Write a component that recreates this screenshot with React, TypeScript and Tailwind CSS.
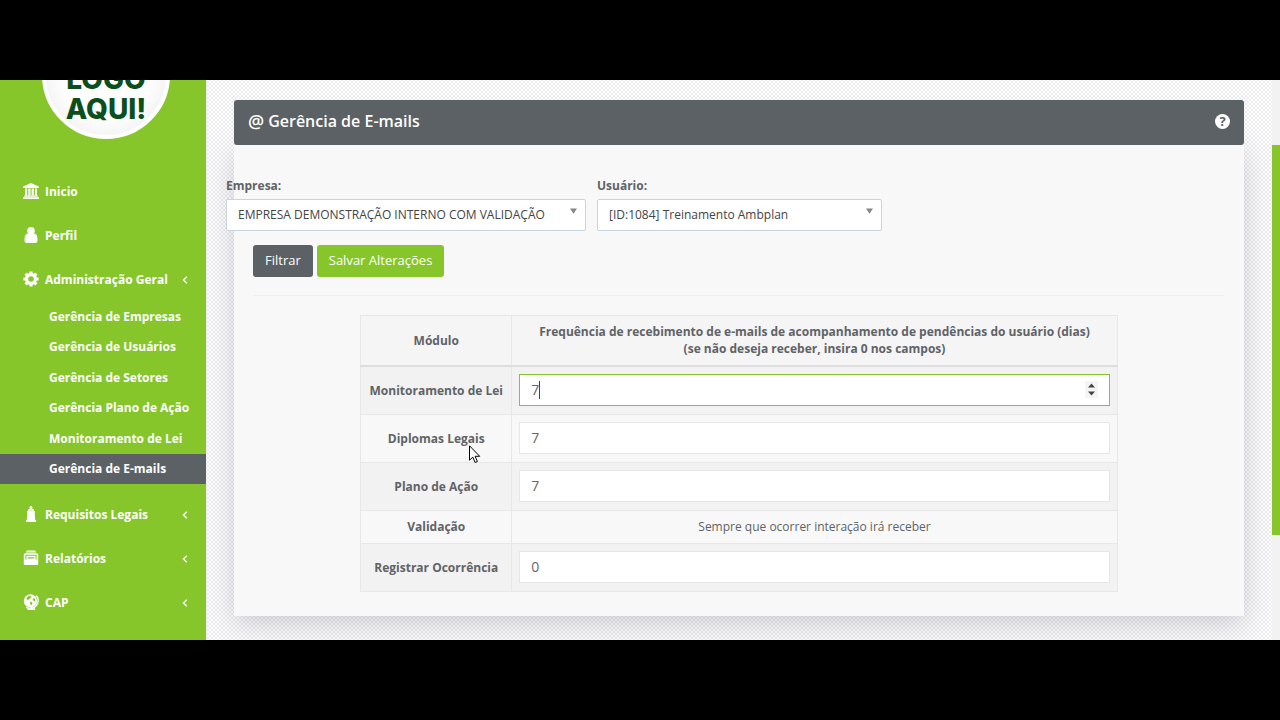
import { useState } from "react";
import type { ReactNode } from "react";

function Icon({ children }: { children: ReactNode }) {
  return (
    <svg viewBox="0 0 16 16" className="mb-[3px] size-4 shrink-0" fill="currentColor" aria-hidden="true">
      {children}
    </svg>
  );
}

const bank = (
  <Icon>
    <path d="M8 0 15.8 3.400V5H.2V3.400ZM2 5.400h2.200v6.800H2ZM5.300 5.400h2.200v6.800H5.300ZM8.600 5.400h2.200v6.800H8.600ZM11.900 5.400H14v6.800h-2.100ZM1.200 12.500h13.600v1.300H1.200ZM0 14.200h16V16H0Z" />
  </Icon>
);
const person = (
  <Icon>
    <circle cx="8" cy="3.800" r="3.800" />
    <path d="M1.500 13.600C1.500 9.600 2.200 6.600 5 6.500h6c2.800.1 3.500 3.100 3.500 7.100 0 1.500-.9 2.400-2.200 2.400H3.700c-1.300 0-2.200-.9-2.200-2.400Z" />
  </Icon>
);
const gear = (
  <Icon>
    <circle cx="8" cy="8" r="4.400" fill="none" stroke="currentColor" strokeWidth="3.200" />
    <path
      stroke="currentColor"
      strokeWidth="3.200"
      d="M8 .4v2.600M8 13v2.600M.4 8h2.600M13 8h2.600M2.600 2.600l1.900 1.900M11.500 11.500l1.900 1.900M2.600 13.400l1.900-1.900M11.500 4.500l1.900-1.900"
    />
  </Icon>
);
const monument = (
  <Icon>
    <path d="M8 0a1.500 1.500 0 0 1 1.100 2.500l1.900 1.200v1.100l1 .6v1h-.3l.5 7.800h.9V16H3v-1.800h.8l.5-7.800H4v-1l1-.6V3.700l1.900-1.200A1.500 1.500 0 0 1 8 0Z" />
    <path className="fill-[#86c62a]" d="M6.900 3.700h.8v.9h-.8ZM8.500 3.700h.8v.9h-.8Z" />
  </Icon>
);
const drawer = (
  <Icon>
    <path d="M4 .6h8l1.200 1.800H2.800ZM1.800 3.200h12.400l1 1.400v9.700c0 .5-.3.700-.8.700H1.600c-.5 0-.8-.2-.8-.7V4.600Z" />
    <path className="fill-[#86c62a]" d="M2.400 4.700h11.200v4.800h-1V5.800h-9.200v3.700h-1ZM4.700 7.300h6.600v1.100H4.700Z" />
  </Icon>
);
const globe = (
  <Icon>
    <circle cx="7.400" cy="6.900" r="6.600" />
    <path className="fill-[#86c62a]" d="M5.400 2.200 7.600 1.800l.8 1.400-1.600 1.600-1.300.2.400 1.300-1.500-.6-1-1.700ZM10 4.200l1.800.3.700 2-1.300.8-1.500-1.200ZM7.200 7.500l2 .7.200 1.400-1.300 1.900-.9-1.600Z" />
    <path fill="none" stroke="currentColor" strokeWidth="1.300" d="M13.300 1.500a7.800 7.800 0 0 1-10.200 11.600" />
    <path d="M7.300 13.200h2.200v1h2.600V16H4.500v-1.800h2.800Z" />
  </Icon>
);

const topItems = [
  { label: "Inicio", icon: bank, more: false },
  { label: "Perfil", icon: person, more: false },
  { label: "Administração Geral", icon: gear, more: true },
];
const subItems = [
  "Gerência de Empresas",
  "Gerência de Usuários",
  "Gerência de Setores",
  "Gerência Plano de Ação",
  "Monitoramento de Lei",
  "Gerência de E-mails",
];
const bottomItems = [
  { label: "Requisitos Legais", icon: monument, more: true },
  { label: "Relatórios", icon: drawer, more: true },
  { label: "CAP", icon: globe, more: true },
];

function NavItem({ label, icon, more }: { label: string; icon: ReactNode; more: boolean }) {
  return (
    <li>
      <a href="#" className="flex h-11 items-center gap-[6px] pr-[18px] pl-[23px]">
        {icon}
        <span className="grow">{label}</span>
        {more && (
          <svg viewBox="0 0 6 8" className="h-2 w-[6px]" fill="none" stroke="currentColor" strokeWidth="1.4" aria-hidden="true">
            <path d="M4.800.8 1.500 4l3.300 3.200" />
          </svg>
        )}
      </a>
    </li>
  );
}

function Sidebar() {
  return (
    <aside className="w-[206px] shrink-0 bg-[#86c62a] text-xs font-bold text-white">
      <div className="flex h-[59px] items-end justify-center overflow-hidden pl-[6px]">
        <div className="flex size-32 shrink-0 flex-col items-center justify-end rounded-full border-4 border-white bg-radial from-white from-50% to-[#e6e7ea] pb-[11px] font-['Inter',sans-serif] text-[28px] leading-[30px] font-extrabold text-[#0b4f1c]">
          <span>LOGO</span>
          <span>AQUI!</span>
        </div>
      </div>
      <nav className="mt-[31px]">
        <ul>
          {topItems.map((item) => (
            <NavItem key={item.label} {...item} />
          ))}
        </ul>
        <ul className="mb-[9px] flex h-[182px] flex-col justify-between">
          {subItems.map((label) => (
            <li key={label}>
              <a
                href="#"
                className={
                  label === "Gerência de E-mails"
                    ? "flex h-[30px] items-center bg-[#5b6164] pl-[49px]"
                    : "flex h-[30px] items-center pl-[49px]"
                }
              >
                {label}
              </a>
            </li>
          ))}
        </ul>
        <ul>
          {bottomItems.map((item) => (
            <NavItem key={item.label} {...item} />
          ))}
        </ul>
      </nav>
    </aside>
  );
}

function Select({ id, label, option, width }: { id: string; label: string; option: string; width: string }) {
  return (
    <div className={width}>
      <label htmlFor={id} className="block text-xs leading-5 font-bold">
        {label}
      </label>
      <div className="relative mt-[3px]">
        <select
          id={id}
          className="block h-8 w-full appearance-none rounded-xs border border-[#c9d5de] bg-white pr-6 pl-[11px] text-xs text-[#444] outline-none"
        >
          <option>{option}</option>
        </select>
        <svg viewBox="0 0 8 6" className="pointer-events-none absolute top-[9px] right-[9px] h-[6px] w-[7px] fill-[#888]" aria-hidden="true">
          <path d="M0 0h8L4 6Z" />
        </svg>
      </div>
    </div>
  );
}

const modules = [
  { id: "lei", name: "Monitoramento de Lei", value: "7" },
  { id: "diplomas", name: "Diplomas Legais", value: "7" },
  { id: "plano", name: "Plano de Ação", value: "7" },
  { id: "validacao", name: "Validação", value: null },
  { id: "ocorrencia", name: "Registrar Ocorrência", value: "0" },
];

function FrequencyField({ id, initial, active }: { id: string; initial: string; active: boolean }) {
  const [value, setValue] = useState(initial);
  return (
    <div className="relative">
      <input
        id={id}
        inputMode="numeric"
        value={value}
        onChange={(e) => setValue(e.target.value)}
        className={
          active
            ? "block h-8 w-full border border-[#86c62a] bg-white px-[11px] text-sm text-[#666] outline-none"
            : "block h-8 w-full border border-[#e5e6e7] bg-white px-[11px] text-sm text-[#666] outline-none"
        }
      />
      {active && (
        <>
          <span className="absolute top-[7px] left-5 h-[18px] w-px bg-[#444]" />
          <svg viewBox="0 0 13 17" className="absolute top-[7px] right-3 h-[17px] w-[13px]" aria-hidden="true">
            <path className="fill-[#f4f4f4]" d="M0 0h13v17H0Z" />
            <path className="fill-[#444]" d="M3 6.500h7L6.500 2.500ZM3 10.500h7l-3.500 4Z" />
          </svg>
        </>
      )}
    </div>
  );
}

function FrequencyTable() {
  return (
    <table className="mx-auto w-3/4 border-collapse border border-[#e7e7e7] text-center text-xs leading-[17px]">
      <thead>
        <tr className="h-[50px] border-b-2 border-[#ddd] bg-[#f5f5f6]">
          <th className="w-[151px] border-r border-[#e7e7e7]">Módulo</th>
          <th>
            Frequência de recebimento de e-mails de acompanhamento de pendências do usuário (dias)
            <br />
            (se não deseja receber, insira 0 nos campos)
          </th>
        </tr>
      </thead>
      <tbody>
        {modules.map((m) => (
          <tr key={m.id} className="border-t border-[#e7e7e7] odd:bg-[#f2f2f2]">
            <th scope="row" className="border-r border-[#e7e7e7] whitespace-nowrap">
              <label htmlFor={m.value === null ? undefined : m.id}>{m.name}</label>
            </th>
            <td className="px-[7px] pt-[7px] pb-2">
              {m.value === null ? (
                <span className="block">Sempre que ocorrer interação irá receber</span>
              ) : (
                <FrequencyField id={m.id} initial={m.value} active={m.id === "lei"} />
              )}
            </td>
          </tr>
        ))}
      </tbody>
    </table>
  );
}

export default function App() {
  return (
    <div className="min-h-screen bg-black py-20 font-['Open_Sans',sans-serif] text-[#5f6366]">
      <div className="flex min-h-[560px]">
        <Sidebar />
        <main className="min-w-0 grow overflow-hidden bg-white bg-[radial-gradient(circle,#dcdce2_0.5px,transparent_1px),radial-gradient(circle,#dcdce2_0.5px,transparent_1px)] bg-[size:4px_4px] bg-[position:0_0,2px_2px] px-7 pt-5 pb-6">
          <header className="relative flex h-[45px] items-center justify-between rounded-[3px] bg-[#5b6164] px-[14px] pb-[3px] text-white">
            <h1 className="flex items-center gap-1 text-base font-semibold">
              <span className="text-lg leading-6">@</span>
              <span>Gerência de E-mails</span>
            </h1>
            <button type="button" aria-label="Ajuda" className="flex size-[15px] items-center justify-center rounded-full bg-white text-[13px] leading-none font-bold text-[#5b6164]">
              ?
            </button>
          </header>
          <form
            className="bg-[#f8f8f8] pt-[31px] pb-6 shadow-[0_8px_26px_rgba(60,60,80,0.22)]"
            onSubmit={(e) => e.preventDefault()}
          >
            <div className="-ml-2 flex gap-[11px]">
              <Select id="empresa" label="Empresa:" option="EMPRESA DEMONSTRAÇÃO INTERNO COM VALIDAÇÃO" width="w-[360px]" />
              <Select id="usuario" label="Usuário:" option="[ID:1084] Treinamento Ambplan" width="w-[285px]" />
            </div>
            <div className="mt-[14px] flex gap-1 pl-[19px] text-[13px] text-white">
              <button type="submit" className="h-8 rounded-[3px] bg-[#5b6164] px-3">Filtrar</button>
              <button type="button" className="h-8 rounded-[3px] bg-[#86c62a] px-3">Salvar Alterações</button>
            </div>
            <hr className="mx-5 mt-[18px] mb-[19px] border-[#eeeeee]" />
            <FrequencyTable />
          </form>
        </main>
        <div className="w-2 shrink-0 bg-[#f2f2f2] pt-[65px]">
          <div className="h-[390px] bg-[#86c62a]" />
        </div>
      </div>
      <svg viewBox="0 0 12 19" className="pointer-events-none absolute top-[445px] left-[469px] h-[19px] w-3" aria-hidden="true">
        <path className="fill-white stroke-black" d="M.5.8v14.400l3.300-3.100 2.300 5.400 2.300-1-2.300-5.200h4.600Z" />
      </svg>
    </div>
  );
}
